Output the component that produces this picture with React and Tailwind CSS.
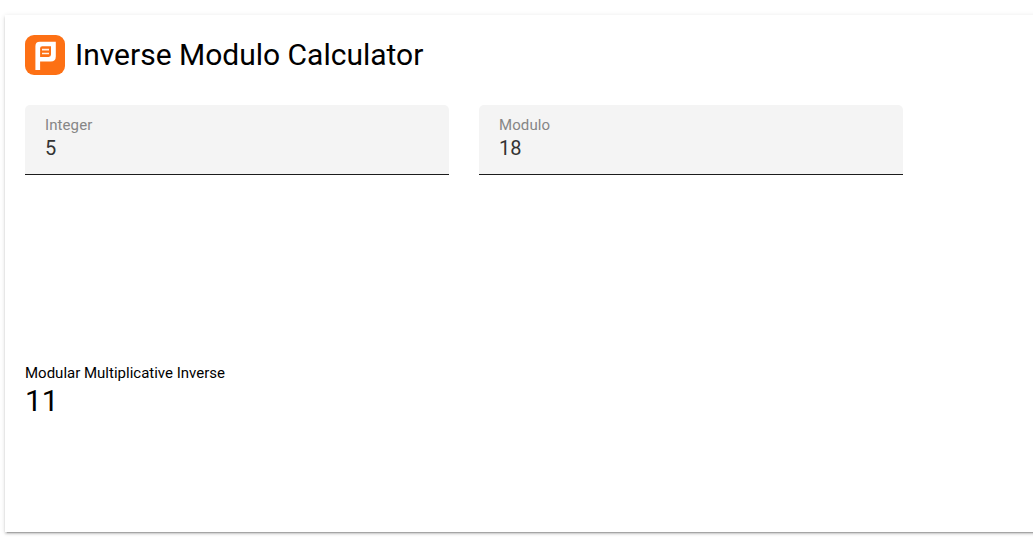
function Logo() {
  return (
    <svg className="size-10 shrink-0" viewBox="0 0 40 40" aria-hidden="true">
      <rect width="40" height="40" rx="9" fill="#fd7014" />
      <path
        d="M10.4 35V11.2Q10.4 6.8 14.8 6.8H30.8V21.6Q30.8 26.6 25.8 26.6H15.1V35ZM17.2 11.2Q15.1 11.2 15.1 13.3V22H23.6Q26 22 26 19.6V11.2Z"
        fill="#fff"
        fillRule="evenodd"
      />
      <path d="M17 14.7H24M17 18.5H24" stroke="#fff" strokeOpacity="0.9" strokeWidth="1.7" />
    </svg>
  );
}

function Field({ label, value }) {
  return (
    <label className="flex h-[70px] w-[424px] flex-col rounded-t-[5px] border-b border-[#1c1c1c] bg-[#f4f4f4] px-5 pt-[10px]">
      <span className="text-[15px] leading-5 tracking-[0.1px] text-[#868686]">{label}</span>
      <input
        className="h-[26px] w-full bg-transparent text-[20px] leading-[26px] text-[#333] outline-none"
        defaultValue={value}
      />
    </label>
  );
}

export default function App() {
  return (
    <div className="h-[537px] overflow-hidden bg-white pt-[15px] pl-[5px] font-[Roboto,sans-serif] text-black">
      <main className="h-[517px] w-[1040px] bg-white px-5 pt-5 shadow-[0_3px_1px_-2px_rgba(0,0,0,0.2),0_2px_2px_0_rgba(0,0,0,0.14),0_1px_5px_0_rgba(0,0,0,0.12)]">
        <header className="flex h-10 items-center gap-[10px]">
          <Logo />
          <h1 className="text-[30px] leading-10">Inverse Modulo Calculator</h1>
        </header>
        <div className="mt-[30px] flex gap-[30px]">
          <Field label="Integer" value="5" />
          <Field label="Modulo" value="18" />
        </div>
        <section className="mt-[188px]">
          <div className="text-[15px] leading-5">Modular Multiplicative Inverse</div>
          <div className="text-[30px] leading-9">11</div>
        </section>
      </main>
    </div>
  );
}
